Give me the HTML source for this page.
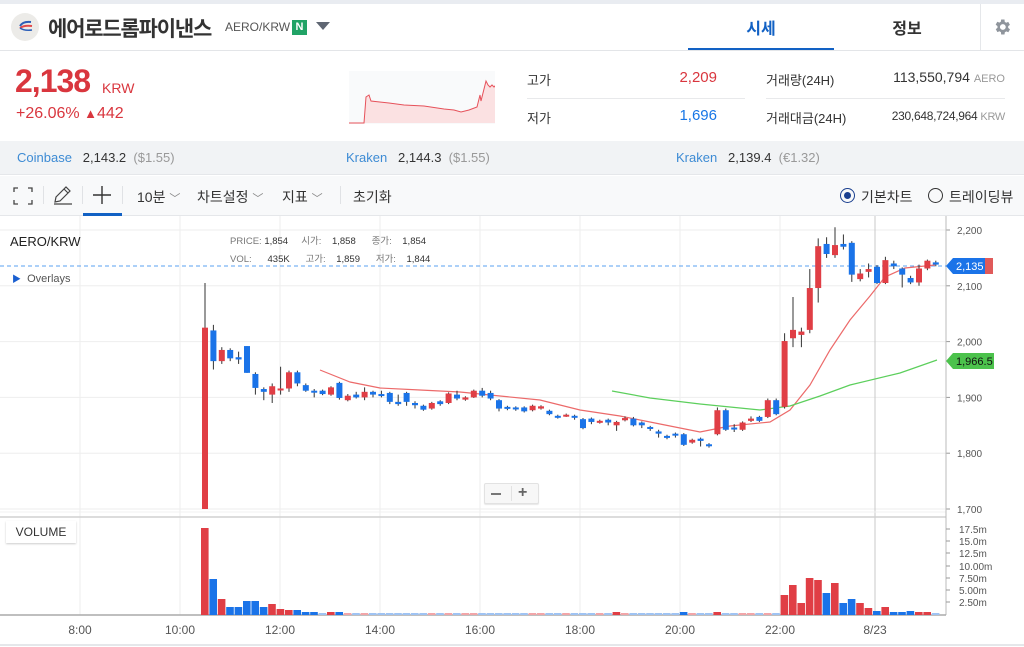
<!DOCTYPE html>
<html><head><meta charset="utf-8">
<style>
*{margin:0;padding:0;box-sizing:border-box}
body{width:1024px;height:647px;overflow:hidden;background:#fff;font-family:"Liberation Sans","Noto Sans CJK KR",sans-serif;color:#333;position:relative}
.a{position:absolute;white-space:nowrap}
</style></head><body>
<div class="a" style="left:0;top:0;width:1024px;height:4px;background:#e9ecf1"></div>
<!-- header -->
<div class="a" style="left:11px;top:13px;width:28px;height:28px;border-radius:50%;background:#ecebe8"></div>
<svg class="a" style="left:11px;top:13px" width="28" height="28"><path d="M20 9 Q12 8 9 13" stroke="#2d5fb8" stroke-width="2" fill="none"/><path d="M21 13 Q13 12 9 15" stroke="#e24a4a" stroke-width="2" fill="none"/><path d="M21 17 Q13 18 9 15" stroke="#2d5fb8" stroke-width="1.5" fill="none"/></svg>
<div class="a" style="left:48px;top:13px;font-size:21px;font-weight:bold;color:#333;letter-spacing:-1.2px">에어로드롬파이낸스</div>
<div class="a" style="left:225px;top:20px;font-size:12px;color:#555">AERO/KRW</div>
<div class="a" style="left:292px;top:20px;width:15px;height:15px;background:#21a366;color:#fff;font-size:11px;font-weight:bold;text-align:center;line-height:15px">N</div>
<svg class="a" style="left:316px;top:22px" width="14" height="9"><path d="M0 0H14L7 8Z" fill="#5f6673"/></svg>
<div class="a" style="left:688px;top:15px;width:146px;text-align:center;font-size:16px;font-weight:bold;color:#1261c4">시세</div>
<div class="a" style="left:688px;top:48px;width:146px;height:3px;background:#1261c4"></div>
<div class="a" style="left:834px;top:15px;width:146px;text-align:center;font-size:16px;font-weight:bold;color:#333">정보</div>
<div class="a" style="left:980px;top:4px;width:1px;height:46px;background:#e5e7ea"></div>
<svg class="a" style="left:992px;top:17px" width="20" height="20" viewBox="0 0 24 24"><path fill="#8f959c" d="M19.4 13a7.5 7.5 0 0 0 0-2l2.1-1.6-2-3.5-2.5 1a7 7 0 0 0-1.7-1L15 3h-4l-.4 2.7a7 7 0 0 0-1.7 1l-2.5-1-2 3.5L6.6 11a7.5 7.5 0 0 0 0 2l-2.1 1.6 2 3.5 2.5-1a7 7 0 0 0 1.7 1L11 21h4l.4-2.7a7 7 0 0 0 1.7-1l2.5 1 2-3.5zM13 15.5a3.5 3.5 0 1 1 0-7 3.5 3.5 0 0 1 0 7z"/></svg>
<div class="a" style="left:0;top:50px;width:1024px;height:1px;background:#e3e5e8"></div>
<!-- price -->
<div class="a" style="left:15px;top:63px;font-size:32px;font-weight:bold;color:#d9363e;letter-spacing:-1px">2,138</div>
<div class="a" style="left:102px;top:80px;font-size:14px;color:#d9363e">KRW</div>
<div class="a" style="left:16px;top:105px;font-size:16px;color:#d9363e">+26.06% <span style="font-size:13px">▲</span>442</div>
<svg class="a" style="left:349px;top:71px" width="146" height="53"><rect width="146" height="53" fill="#f9fafb"/><path d="M0 52H15L17 26L20 24L22 30L40 32L55 34L75 35L95 38L105 39L112 41L120 39L128 36L131 24L132 30L135 18L137 10L139 14L141 16L143 14L145 16L147 14L149 15L150 13V52H0Z" fill="#fbe1e2"/><path d="M0 52H15L17 26L20 24L22 30L40 32L55 34L75 35L95 38L105 39L112 41L120 39L128 36L131 24L132 30L135 18L137 10L139 14L141 16L143 14L145 16L147 14L149 15L150 13" stroke="#e6515a" fill="none" stroke-width="1"/></svg>
<div class="a" style="left:527px;top:70px;font-size:13px;color:#333">고가</div>
<div class="a" style="left:620px;top:69px;width:97px;text-align:right;font-size:15px;color:#d9363e">2,209</div>
<div class="a" style="left:527px;top:98px;width:218px;height:1px;background:#e8e9eb"></div>
<div class="a" style="left:527px;top:108px;font-size:13px;color:#333">저가</div>
<div class="a" style="left:620px;top:107px;width:97px;text-align:right;font-size:15px;color:#1776e6">1,696</div>
<div class="a" style="left:766px;top:70px;font-size:13px;color:#333">거래량(24H)</div>
<div class="a" style="left:766px;top:98px;width:239px;height:1px;background:#e8e9eb"></div>
<div class="a" style="left:766px;top:108px;font-size:13px;color:#333">거래대금(24H)</div>
<div class="a" style="left:860px;top:69px;width:145px;text-align:right;font-size:14px;color:#333">113,550,794 <span style="font-size:11px;color:#999">AERO</span></div>
<div class="a" style="left:860px;top:109px;width:145px;text-align:right;font-size:12px;color:#333;letter-spacing:-0.3px">230,648,724,964 <span style="font-size:11px;color:#999">KRW</span></div>
<!-- exchanges -->
<div class="a" style="left:0;top:141px;width:1024px;height:34px;background:#f1f3f5;border-bottom:1px solid #e5e7ea"></div>
<div class="a" style="left:17px;top:150px;font-size:13px"><span style="color:#3d8bd4">Coinbase</span>&nbsp;&nbsp; <span style="color:#333">2,143.2</span>&nbsp; <span style="color:#999">($1.55)</span></div>
<div class="a" style="left:346px;top:150px;font-size:13px"><span style="color:#3d8bd4">Kraken</span>&nbsp;&nbsp; <span style="color:#333">2,144.3</span>&nbsp; <span style="color:#999">($1.55)</span></div>
<div class="a" style="left:676px;top:150px;font-size:13px"><span style="color:#3d8bd4">Kraken</span>&nbsp;&nbsp; <span style="color:#333">2,139.4</span>&nbsp; <span style="color:#999">(€1.32)</span></div>
<!-- toolbar -->
<div class="a" style="left:0;top:176px;width:1024px;height:40px;background:#f8f9fa;border-bottom:1px solid #e5e7ea"></div>
<svg class="a" style="left:13px;top:187px" width="20" height="18"><path d="M1 5V1H5M15 1H19V5M19 13V17H15M5 17H1V13" stroke="#444" stroke-width="1.3" fill="none"/></svg>
<div class="a" style="left:43px;top:186px;width:1px;height:18px;background:#e0e2e5"></div>
<svg class="a" style="left:52px;top:185px" width="22" height="20"><path d="M3 17L4 12L14 2L18 6L8 16ZM12 4L16 8M2 19H20" stroke="#444" stroke-width="1.2" fill="none"/></svg>
<div class="a" style="left:82px;top:186px;width:1px;height:18px;background:#e0e2e5"></div>
<svg class="a" style="left:92px;top:185px" width="20" height="20"><path d="M10 1V19M1 10H19" stroke="#333" stroke-width="1.4"/></svg>
<div class="a" style="left:83px;top:213px;width:39px;height:3px;background:#1261c4"></div>
<div class="a" style="left:122px;top:186px;width:1px;height:18px;background:#e0e2e5"></div>
<div class="a" style="left:137px;top:187px;font-size:14px;color:#333">10분 <span style="color:#888;font-size:11px">﹀</span></div>
<div class="a" style="left:197px;top:187px;font-size:14px;color:#333">차트설정 <span style="color:#888;font-size:11px">﹀</span></div>
<div class="a" style="left:282px;top:187px;font-size:14px;color:#333">지표 <span style="color:#888;font-size:11px">﹀</span></div>
<div class="a" style="left:340px;top:186px;width:1px;height:18px;background:#e0e2e5"></div>
<div class="a" style="left:353px;top:187px;font-size:14px;color:#333">초기화</div>
<div class="a" style="left:840px;top:188px;width:15px;height:15px;border-radius:50%;border:1.5px solid #1a3f8f"></div>
<div class="a" style="left:844px;top:192px;width:7px;height:7px;border-radius:50%;background:#1a3f8f"></div>
<div class="a" style="left:861px;top:187px;font-size:14px;color:#333">기본차트</div>
<div class="a" style="left:928px;top:188px;width:15px;height:15px;border-radius:50%;border:1.3px solid #333"></div>
<div class="a" style="left:949px;top:187px;font-size:14px;color:#333">트레이딩뷰</div>
<!-- chart -->
<svg id="ch" class="a" style="left:0;top:216px" width="1024" height="431" viewBox="0 216 1024 431" font-family="Liberation Sans, sans-serif"></svg>
<div class="a" style="left:10px;top:234px;font-size:13px;color:#222">AERO/KRW</div>
<div class="a" style="left:12px;top:272px;font-size:11px;color:#555"><span style="color:#1a5fd0;font-size:9px">▶</span>&nbsp; Overlays</div>
<div class="a" style="left:230px;top:233px;font-size:9.5px;color:#777;line-height:18px">PRICE:&nbsp;<span style="color:#333">1,854</span>&nbsp;&nbsp;&nbsp;&nbsp; 시가:&nbsp;&nbsp;&nbsp;&nbsp;<span style="color:#333">1,858</span>&nbsp;&nbsp;&nbsp;&nbsp;&nbsp; 종가:&nbsp;&nbsp;&nbsp;&nbsp;<span style="color:#333">1,854</span><br>VOL:&nbsp;&nbsp;&nbsp;&nbsp;&nbsp;&nbsp;<span style="color:#333">435K</span>&nbsp;&nbsp;&nbsp;&nbsp;&nbsp; 고가:&nbsp;&nbsp;&nbsp;&nbsp;<span style="color:#333">1,859</span>&nbsp;&nbsp;&nbsp;&nbsp;&nbsp; 저가:&nbsp;&nbsp;&nbsp;&nbsp;<span style="color:#333">1,844</span></div>
<div class="a" style="left:484px;top:483px;width:55px;height:21px;background:#f7f7f7;border:1px solid #e2e2e2;border-radius:2px;box-shadow:0 1px 1px rgba(0,0,0,.1)"></div>
<div class="a" style="left:491px;top:493px;width:10px;height:2px;background:#777"></div>
<div class="a" style="left:511px;top:486px;width:1px;height:15px;background:#e2e2e2"></div>
<div class="a" style="left:518px;top:484px;font-size:16px;font-weight:bold;color:#666">+</div>
<div class="a" style="left:6px;top:521px;width:70px;height:22px;background:#fff;box-shadow:0 1px 2px rgba(0,0,0,.2);font-size:12px;color:#333;text-align:center;line-height:22px">VOLUME</div>
<script>
var D=[[1700,2025,2105,1700],[2020,1965,2030,1950],[1965,1985,1990,1960],[1985,1970,1988,1965],[1972,1968,1982,1960],[1992,1944,1992,1944],[1942,1917,1945,1905],[1915,1910,1918,1895],[1905,1920,1925,1890],[1915,1916,1955,1905],[1916,1945,1948,1910],[1945,1925,1948,1920],[1922,1912,1925,1910],[1912,1911,1915,1900],[1912,1906,1914,1904],[1905,1918,1920,1903],[1926,1899,1928,1896],[1895,1903,1906,1893],[1905,1900,1910,1898],[1900,1910,1918,1895],[1910,1905,1912,1900],[1906,1904,1912,1900],[1908,1892,1910,1888],[1892,1888,1905,1885],[1908,1892,1910,1885],[1890,1886,1893,1880],[1885,1878,1887,1876],[1880,1890,1892,1878],[1893,1888,1895,1885],[1890,1907,1909,1888],[1905,1898,1912,1895],[1896,1900,1902,1894],[1900,1912,1914,1899],[1912,1903,1917,1900],[1908,1898,1912,1895],[1895,1880,1897,1875],[1883,1880,1885,1877],[1882,1879,1884,1876],[1882,1875,1884,1873],[1877,1885,1887,1875],[1880,1884,1886,1878],[1876,1870,1878,1868],[1867,1866,1869,1862],[1866,1869,1871,1865],[1867,1864,1869,1860],[1861,1845,1863,1843],[1862,1856,1864,1852],[1855,1858,1860,1853],[1860,1855,1862,1850],[1850,1856,1858,1840],[1859,1863,1866,1857],[1862,1850,1865,1848],[1855,1850,1857,1845],[1847,1846,1849,1840],[1839,1835,1842,1828],[1831,1830,1833,1825],[1835,1832,1837,1828],[1834,1815,1836,1813],[1819,1824,1826,1817],[1826,1822,1828,1812],[1816,1815,1818,1810],[1834,1877,1882,1832],[1877,1842,1880,1840],[1846,1845,1852,1838],[1842,1855,1857,1840],[1858,1862,1866,1856],[1865,1858,1867,1856],[1865,1895,1898,1863],[1895,1870,1898,1868],[1883,2001,2015,1880],[2006,2021,2080,1990],[2012,2018,2025,1990],[2021,2096,2130,2015],[2096,2171,2185,2070],[2175,2157,2187,2150],[2155,2173,2205,2150],[2175,2170,2192,2165],[2177,2120,2180,2107],[2112,2122,2130,2108],[2125,2130,2140,2115],[2134,2105,2137,2103],[2105,2146,2152,2103],[2140,2135,2145,2130],[2131,2120,2133,2097],[2114,2106,2118,2103],[2106,2131,2138,2100],[2131,2145,2147,2128],[2142,2138,2145,2135]];
var V={0:87,1:36,2:16,3:8,4:8,5:14,6:14,7:8,8:11,9:6,10:5,11:5,12:3,13:3,14:2,15:3,16:3,69:20,70:30,71:12,72:37,73:35,74:22,75:32,76:12,77:16,78:12,79:7,80:4,81:8,82:3,83:3,84:4,85:3,86:3,87:2,57:3,49:3,61:3};
function y(p){return 230+(2200-p)*0.558}
var s='';
s+='<rect x="0" y="216" width="1024" height="431" fill="#fff"/>';
[80,180,280,380,480,580,680,780].forEach(function(x){s+='<line x1="'+x+'" y1="216" x2="'+x+'" y2="615" stroke="#eeeeee"/>'});
[2200,2100,2000,1900,1800,1700].forEach(function(p){s+='<line x1="0" y1="'+y(p)+'" x2="946" y2="'+y(p)+'" stroke="#eeeeee"/><line x1="946" y1="'+y(p)+'" x2="950" y2="'+y(p)+'" stroke="#999"/><text x="957" y="'+(y(p)+4)+'" font-size="10" fill="#555">'+p.toLocaleString('en')+'</text>'});
s+='<line x1="875" y1="216" x2="875" y2="615" stroke="#c8c8c8"/>';
s+='<line x1="0" y1="517" x2="946" y2="517" stroke="#d0d0d0" stroke-width="1.5"/><line x1="0" y1="512" x2="946" y2="512" stroke="#f0f0f0"/>';
s+='<line x1="946" y1="216" x2="946" y2="615" stroke="#bbb"/>';
s+='<line x1="0" y1="266" x2="946" y2="266" stroke="#5aa0f0" stroke-dasharray="4,3"/>';
s+='<line x1="0" y1="615" x2="946" y2="615" stroke="#aaa" stroke-width="1.5"/>';
s+='<path d="M320 370 L350 382 L380 388 L420 390 L460 392 L500 396 L540 400 L580 410 L620 416 L660 424 L700 432 L730 426 L770 422 L790 410 L810 385 L830 350 L850 320 L870 296 L885 277 L905 268 L935 265" stroke="#ec6a6a" fill="none" stroke-width="1.2"/>';
s+='<path d="M612 391 L650 398 L700 404 L760 410 L790 406 L820 396 L850 385 L900 373 L937 360" stroke="#5ccf5c" fill="none" stroke-width="1.2"/>';
D.forEach(function(d,i){var x=205+i*8.4,up=d[1]>=d[0],c=up?'#e03e45':'#1a73e8';
var t=y(Math.max(d[0],d[1])),b=y(Math.min(d[0],d[1]));if(b-t<2)b=t+2;
s+='<line x1="'+x+'" y1="'+y(d[2])+'" x2="'+x+'" y2="'+y(d[3])+'" stroke="#333"/>';
s+='<rect x="'+(x-3)+'" y="'+t+'" width="6" height="'+(b-t)+'" fill="'+c+'"/>';
var h=V[i]||2,vc=h<=2?(up?'#f2a5a8':'#9fc3f3'):c;
s+='<rect x="'+(x-4)+'" y="'+(615-h)+'" width="7.6" height="'+h+'" fill="'+vc+'"/>';});
[['17.5m',529],['15.0m',541],['12.5m',553],['10.00m',566],['7.50m',578],['5.00m',590],['2.50m',602]].forEach(function(a){s+='<line x1="946" y1="'+a[1]+'" x2="950" y2="'+a[1]+'" stroke="#999"/><text x="959" y="'+(a[1]+4)+'" font-size="10" fill="#555">'+a[0]+'</text>'});
[['8:00',80],['10:00',180],['12:00',280],['14:00',380],['16:00',480],['18:00',580],['20:00',680],['22:00',780],['8/23',875]].forEach(function(a){s+='<text x="'+a[1]+'" y="634" font-size="12" fill="#555" text-anchor="middle">'+a[0]+'</text>'});
s+='<line x1="0" y1="645" x2="1024" y2="645" stroke="#e5e7ea" stroke-width="2"/>';
s+='<path d="M950 266 L957 258 H993 V274 H957 Z" fill="#e05a5a"/><path d="M946 266 L953 258 H985 V274 H953 Z" fill="#1a73e8"/><text x="956" y="270" font-size="11" fill="#fff">2,135</text>';
s+='<path d="M946 361 L953 353 H994 V369 H953 Z" fill="#4cc24c"/><text x="956" y="365" font-size="11" fill="#111">1,966.5</text>';
document.getElementById('ch').innerHTML=s;
</script>
</body></html>
